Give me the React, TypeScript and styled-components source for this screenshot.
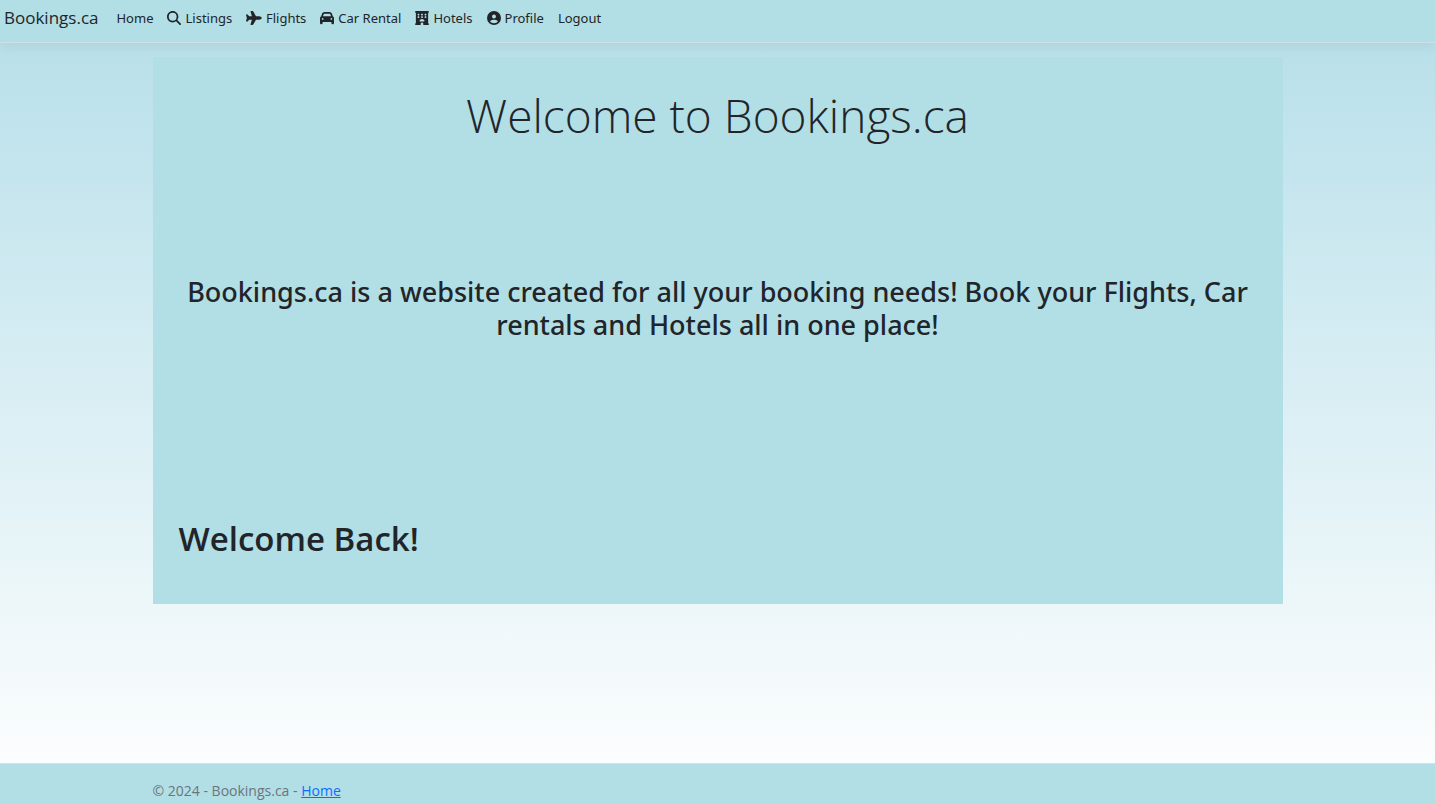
import React from "react";
import styled, { createGlobalStyle } from "styled-components";
import { FaMagnifyingGlass, FaCar, FaHotel, FaCircleUser } from "react-icons/fa6";

const GlobalStyle = createGlobalStyle`
  * { box-sizing: border-box; }
  body {
    margin: 0;
    color: #212529;
    font-family: "Segoe UI", "Open Sans", "Noto Sans", sans-serif;
    font-size: 14px;
    line-height: 22px;
  }
`;

const Page = styled.div`
  min-height: 100vh;
  display: flex;
  flex-direction: column;
  background: linear-gradient(to bottom, #b5dee9, #ffffff);
`;

const NavBar = styled.header`
  display: flex;
  align-items: center;
  height: 43px;
  padding: 0 4px 6px;
  background: #b2dee5;
  border-bottom: 1px solid #cfdfe4;
  box-shadow: 0 4px 12px rgba(0, 0, 0, 0.06);
`;

const Brand = styled.a`
  margin-right: 18px;
  color: #212529;
  font-size: 17px;
  text-decoration: none;
`;

const NavLinks = styled.nav`
  display: flex;
  gap: 14px;
  font-family: "Segoe UI", "Noto Sans", sans-serif;
  font-size: 13px;
`;

const NavLink = styled.a`
  display: flex;
  align-items: center;
  gap: 4px;
  color: #212529;
  text-decoration: none;
  white-space: nowrap;

  svg {
    flex: none;
    width: auto;
    height: 14px;
  }
`;

const Container = styled.div`
  width: 100%;
  max-width: 1130px;
  margin: 0 auto;
`;

const Main = styled.main`
  flex: 1;
  padding: 14px 0;
`;

const Card = styled.section`
  padding: 30px 26px 44px;
  background: #b2dee5;
`;

const Title = styled.h1`
  margin: 0;
  font-size: 46px;
  font-weight: 300;
  line-height: 56px;
  text-align: center;
`;

const Lead = styled.h3`
  margin: 132px 0;
  font-family: "Segoe UI", "Noto Sans", sans-serif;
  font-size: 27px;
  font-weight: 500;
  line-height: 33px;
  text-align: center;
`;

const Greeting = styled.h2`
  margin: 0;
  padding-top: 45px;
  font-size: 33px;
  font-weight: 600;
  line-height: 42px;
`;

const Footer = styled.footer`
  height: 41px;
  padding-top: 16px;
  color: #6c757d;
  background: #b2dee5;
  border-top: 1px solid #d3e3e6;
`;

const FooterLink = styled.a`
  color: #0d6efd;
`;

function PlaneIcon() {
  return (
    <svg viewBox="0 0 576 512" fill="currentColor" aria-hidden>
      <path d="M482.3 192C516.5 192 576 221 576 256C576 292 516.5 320 482.3 320H365.7L265.2 495.9C259.5 505.8 248.9 512 237.4 512H181.2C170.6 512 162.9 501.8 165.8 491.6L214.9 320H112L68.8 377.6C65.8 381.6 61 384 56 384H14C6.3 384 0 377.7 0 370C0 368.7 .2 367.4 .5 366.1L32 256L.5 145.9C.2 144.6 0 143.3 0 142C0 134.3 6.3 128 14 128H56C61 128 65.8 130.4 68.8 134.4L112 192H214.9L165.8 20.4C162.9 10.2 170.6 0 181.2 0H237.4C248.9 0 259.5 6.2 265.2 16.1L365.7 192H482.3z" />
    </svg>
  );
}

const links = [
  { label: "Home" },
  { label: "Listings", Icon: FaMagnifyingGlass },
  { label: "Flights", Icon: PlaneIcon },
  { label: "Car Rental", Icon: FaCar },
  { label: "Hotels", Icon: FaHotel },
  { label: "Profile", Icon: FaCircleUser },
  { label: "Logout" },
];

export default function App() {
  return (
    <Page>
      <GlobalStyle />
      <NavBar>
        <Brand href="#">Bookings.ca</Brand>
        <NavLinks>
          {links.map(({ label, Icon }) => (
            <NavLink key={label} href="#">
              {Icon && <Icon aria-hidden />}
              {label}
            </NavLink>
          ))}
        </NavLinks>
      </NavBar>
      <Main>
        <Container>
          <Card>
            <Title>Welcome to Bookings.ca</Title>
            <Lead>
              Bookings.ca is a website created for all your booking needs! Book your Flights, Car rentals and Hotels
              all in one place!
            </Lead>
            <Greeting>Welcome Back!</Greeting>
          </Card>
        </Container>
      </Main>
      <Footer>
        <Container>
          © 2024 - Bookings.ca - <FooterLink href="#">Home</FooterLink>
        </Container>
      </Footer>
    </Page>
  );
}
